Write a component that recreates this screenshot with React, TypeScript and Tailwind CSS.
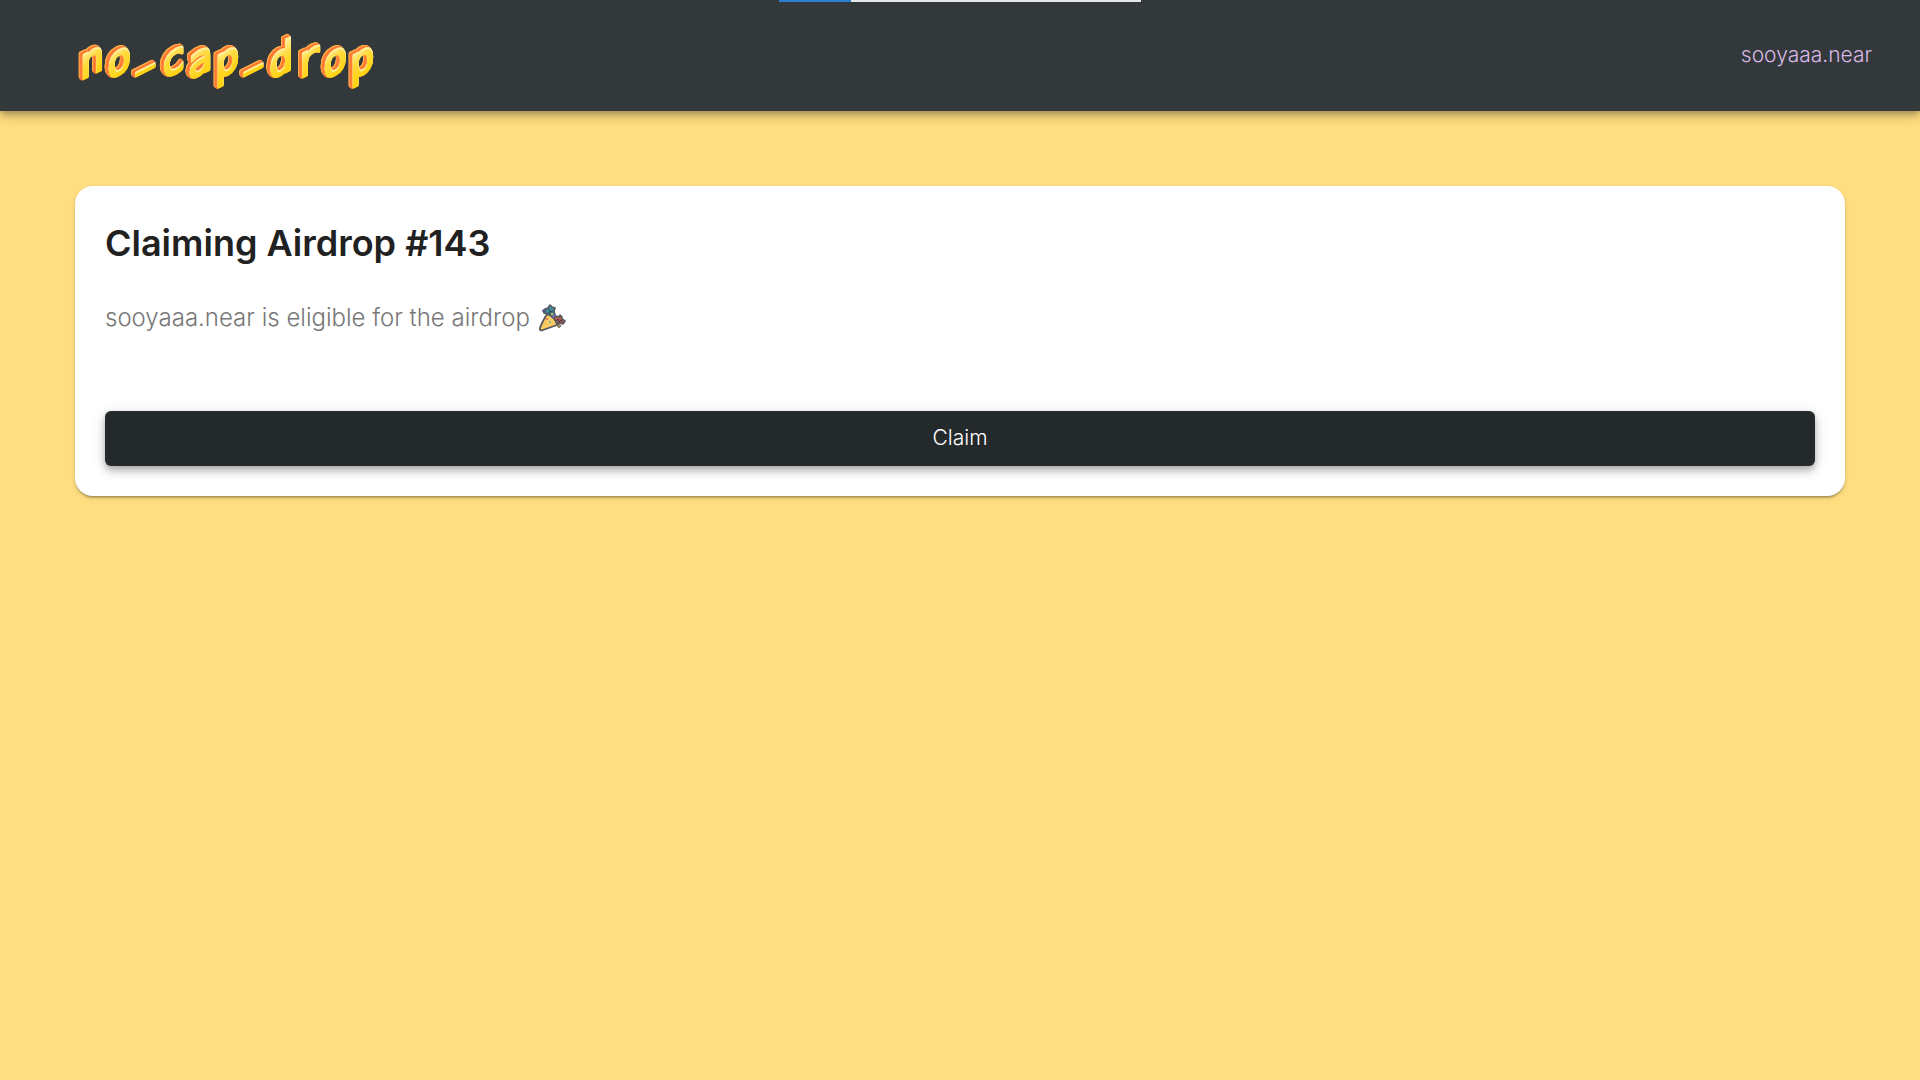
const LETTERS = [..."no_cap_drop"];

function Logo() {
  return (
    <svg width="310" height="63" viewBox="0 0 310 63" role="img" aria-label="no_cap_drop" className="overflow-visible">
      <defs>
        <linearGradient id="face" gradientUnits="userSpaceOnUse" x1="4" y1="-26" x2="14" y2="0">
          <stop offset="0" stopColor="#ffee96" />
          <stop offset="0.4" stopColor="#ffdb40" />
          <stop offset="1" stopColor="#ffd313" />
        </linearGradient>
        <filter id="extrude" filterUnits="userSpaceOnUse" x="-5" y="-5" width="320" height="75" colorInterpolationFilters="sRGB">
          <feDropShadow dx="0" dy="-1" stdDeviation="0" floodColor="#fff3a8" />
          <feDropShadow dx="0" dy="-1" stdDeviation="0" floodColor="#ffec8c" />
          <feDropShadow dx="-1" dy="0" stdDeviation="0" floodColor="#ff8a35" />
          <feDropShadow dx="-1" dy="-1" stdDeviation="0" floodColor="#ff7433" />
          <feDropShadow dx="-1" dy="0" stdDeviation="0" floodColor="#ff7f36" />
          <feDropShadow dx="-1" dy="-1" stdDeviation="0" floodColor="#ffae48" />
        </filter>
      </defs>
      <g filter="url(#extrude)" fontFamily="'DejaVu Sans Mono', monospace" fill="url(#face)" stroke="url(#face)">
        {LETTERS.map((letter, i) => (
          <text
            key={i}
            transform={`translate(${(letter === "_" ? 8 : 5) + i * 27} ${letter === "_" ? 45 : 57}) skewY(-27)`}
            fontSize={letter === "_" ? 28 : 41}
            strokeWidth={letter === "_" ? 3 : 2}
          >
            {letter}
          </text>
        ))}
      </g>
    </svg>
  );
}

function PartyPopper() {
  return (
    <svg width="28" height="28" viewBox="0 0 28 28" role="img" aria-label="Party popper" strokeLinejoin="round" strokeLinecap="round">
      <path d="M7 5l3-1 2-3 2 2 3 1-1 3 1 4-3 2-4-3-4-1z" fill="#3f8ea6" stroke="#55595d" strokeWidth="1.6" />
      <path d="M15 15l3-3 3 1 1-2 2 2 0 2 3 2-2 3-4-1-4 2z" fill="#b95850" stroke="#55595d" strokeWidth="1.6" />
      <path d="M11 5l1 3 3-1M10 9l4 0M18 17l2-2 1 3 2-2 1 2" fill="none" stroke="#34464f" strokeWidth="1" />
      <path d="M9 10c-3 5-6 11-7 14-1 2 1 3 3 2l14-5c-1-5-5-9-10-11z" fill="#fdcb64" stroke="#55595d" strokeWidth="1.8" />
      <circle cx="6" cy="7" r="1.4" fill="#665cc4" stroke="#55595d" strokeWidth="1" />
      <path d="M14 13l3-2" stroke="#7569c9" strokeWidth="1.4" />
      <circle cx="14" cy="10" r="1" fill="#e8ca35" />
      <circle cx="21" cy="22" r="1.4" fill="#e8ca35" stroke="#55595d" strokeWidth="1" />
      <circle cx="9" cy="15" r="0.9" fill="#e45b4c" />
      <circle cx="12" cy="18" r="0.9" fill="#4aa9d0" />
      <circle cx="8" cy="20" r="0.7" fill="#f0b44c" />
    </svg>
  );
}

export default function App() {
  return (
    <div className="min-h-screen bg-[#ffde81] font-['Inter',sans-serif] text-[#212121]">
      <div
        role="progressbar"
        aria-label="Page loading"
        aria-valuenow={20}
        aria-valuemin={0}
        aria-valuemax={100}
        className="absolute top-0 left-1/2 h-0.5 w-[362px] -translate-x-1/2 bg-[#e4e7e7]"
      >
        <div className="h-full w-1/5 bg-[#2a7fd0]" />
      </div>
      <header className="flex h-[111px] items-center justify-between bg-[#33393b] pr-12 pl-[75px] shadow-[0_3px_6px_-1px_rgba(0,0,0,0.2),0_6px_8px_0_rgba(0,0,0,0.14),0_2px_15px_0_rgba(0,0,0,0.12)]">
        <a href="#">
          <Logo />
        </a>
        <a href="#" className="pb-0.5 text-[21px] leading-8 font-light text-[#d9b8e6]">
          sooyaaa.near
        </a>
      </header>
      <main className="px-[75px] pt-[75px]">
        <section className="rounded-[18px] bg-white p-[30px] shadow-[0_3px_2px_-2px_rgba(0,0,0,0.2),0_2px_2px_0_rgba(0,0,0,0.14),0_2px_5px_0_rgba(0,0,0,0.12)]">
          <h1 className="text-4xl leading-[54px] font-semibold">Claiming Airdrop #143</h1>
          <p className="mt-[30px] flex items-center gap-2 text-2xl leading-9 font-light text-[#777777]">
            sooyaaa.near is eligible for the airdrop
            <PartyPopper />
          </p>
          <button
            type="button"
            className="mt-[75px] h-[55px] w-full rounded-md bg-[#24292b] pb-0.5 text-[21px] font-light text-white shadow-[0_3px_6px_-1px_rgba(0,0,0,0.2),0_6px_8px_0_rgba(0,0,0,0.14),0_2px_15px_0_rgba(0,0,0,0.12)]"
          >
            Claim
          </button>
        </section>
      </main>
    </div>
  );
}
